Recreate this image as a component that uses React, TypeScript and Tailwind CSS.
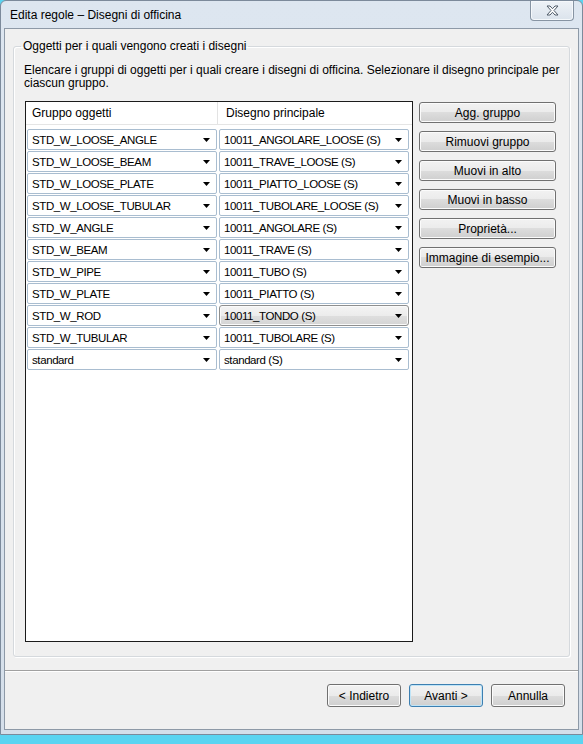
import React from 'react'

const rows: [string, string][] = [
  ['STD_W_LOOSE_ANGLE', '10011_ANGOLARE_LOOSE (S)'],
  ['STD_W_LOOSE_BEAM', '10011_TRAVE_LOOSE (S)'],
  ['STD_W_LOOSE_PLATE', '10011_PIATTO_LOOSE (S)'],
  ['STD_W_LOOSE_TUBULAR', '10011_TUBOLARE_LOOSE (S)'],
  ['STD_W_ANGLE', '10011_ANGOLARE (S)'],
  ['STD_W_BEAM', '10011_TRAVE (S)'],
  ['STD_W_PIPE', '10011_TUBO (S)'],
  ['STD_W_PLATE', '10011_PIATTO (S)'],
  ['STD_W_ROD', '10011_TONDO (S)'],
  ['STD_W_TUBULAR', '10011_TUBOLARE (S)'],
  ['standard', 'standard (S)'],
]

const sideButtons = [
  'Agg. gruppo',
  'Rimuovi gruppo',
  'Muovi in alto',
  'Muovi in basso',
  'Proprietà...',
  'Immagine di esempio...',
]

function Arrow() {
  return (
    <svg width="7" height="4" viewBox="0 0 7 4" className="shrink-0">
      <path d="M0 0h7L3.5 4z" fill="#000" />
    </svg>
  )
}

function Combo({ text, active }: { text: string; active?: boolean }) {
  return (
    <div
      className={
        active
          ? 'flex h-[21px] w-[190px] items-center justify-between rounded-[3px] border border-[#8e8f8f] bg-[linear-gradient(to_bottom,#f4f4f4_0%,#ececec_50%,#dfdfdf_50%,#d4d4d4_100%)] pl-[4px] pr-[6px] shadow-[inset_0_0_0_1px_#fafafa]'
          : 'flex h-[21px] w-[190px] items-center justify-between rounded-[2px] border border-[#a9bdd0] bg-white pl-[4px] pr-[6px]'
      }
    >
      <span className="whitespace-nowrap text-[11.5px] tracking-[-0.035em]">{text}</span>
      <Arrow />
    </div>
  )
}

function WinButton({ label, w, primary }: { label: string; w: string; primary?: boolean }) {
  return (
    <button
      className={`${w} flex h-[21px] items-center justify-center rounded-[3px] border bg-[linear-gradient(to_bottom,#f2f2f2_0%,#ebebeb_50%,#dddddd_50%,#cfcfcf_100%)] ${
        primary
          ? 'border-[#3c7fb1] shadow-[inset_0_0_0_1px_#bfe4f7]'
          : 'border-[#707070] shadow-[inset_0_0_0_1px_#fbfbfb]'
      }`}
    >
      {label}
    </button>
  )
}

export default function App() {
  return (
    <div className="h-[744px] w-[583px] overflow-hidden bg-[#5ad4f1] font-['Liberation_Sans',Arial,sans-serif] text-[12px] leading-[14px] text-black">
      <div className="flex h-[735px] flex-col rounded-t-[6px] border border-[#7c8a9b] bg-[linear-gradient(to_bottom,#dde6f0_0%,#d5dfea_100%)] px-[3px] pb-[4px]">
        {/* Title bar */}
        <div className="flex h-[27px] items-start justify-between">
          <div className="pl-[6px] pt-[7px] text-[12px]">Edita regole – Disegni di officina</div>
          <div className="mr-[5px] flex h-[20px] w-[44px] items-center justify-center rounded-b-[4px] border border-t-0 border-[#8794a3] bg-[linear-gradient(to_bottom,#eef2f7_0%,#dbe3ec_100%)] shadow-[inset_0_0_0_1px_#f5f8fb]">
            <svg width="13" height="11" viewBox="0 0 13 11">
              <path
                d="M1 1h3l2.5 2.7L9 1h3L8 5.5l4 4.5H9L6.5 7.3 4 10H1l4-4.5z"
                fill="#fff"
                stroke="#4f5b69"
                strokeWidth="1"
                strokeLinejoin="round"
              />
            </svg>
          </div>
        </div>

        {/* Client area */}
        <div className="flex flex-1 flex-col border border-[#8d99a7] bg-[#f0f0f0]">
          <fieldset className="mx-[8px] mt-[10px] h-[618px] rounded-[3px] border border-[#d5d9dd] px-[10px] shadow-[inset_1px_1px_0_#ffffff,1px_1px_0_#ffffff]">
            <legend className="ml-[-3px] px-[2px]">Oggetti per i quali vengono creati i disegni</legend>
            <p className="mt-[11px] whitespace-nowrap leading-[13px]">
              Elencare i gruppi di oggetti per i quali creare i disegni di officina. Selezionare il disegno principale per
              <br />
              ciascun gruppo.
            </p>

            <div className="mt-[11px] flex items-start gap-[6px]">
              {/* List */}
              <div className="ml-[1px] h-[541px] w-[388px] border border-[#1b1b1b] bg-white">
                <div className="flex h-[23px] border-b border-[#e5e5e5]">
                  <div className="flex w-[192px] items-center border-r border-[#e3e3e3] pl-[6px]">Gruppo oggetti</div>
                  <div className="flex flex-1 items-center pl-[8px]">Disegno principale</div>
                </div>
                <div className="flex flex-col gap-[1px] pl-[1px] pt-[4px]">
                  {rows.map(([a, b], i) => (
                    <div key={a} className="flex gap-[2px]">
                      <Combo text={a} />
                      <Combo text={b} active={i === 8} />
                    </div>
                  ))}
                </div>
              </div>

              {/* Side buttons */}
              <div className="flex flex-col gap-[8px] pt-[1px]">
                {sideButtons.map((b) => (
                  <WinButton key={b} label={b} w="w-[137px]" />
                ))}
              </div>
            </div>
          </fieldset>

          <div className="mt-[13px] border-t border-[#a0a0a0] shadow-[0_1px_0_#ffffff]" />

          <div className="mt-[13px] flex justify-end gap-[8px] pr-[13px]">
            <WinButton label="< Indietro" w="w-[74px] h-[23px]" />
            <WinButton label="Avanti >" w="w-[74px] h-[23px]" primary />
            <WinButton label="Annulla" w="w-[74px] h-[23px]" />
          </div>
        </div>
      </div>
    </div>
  )
}
